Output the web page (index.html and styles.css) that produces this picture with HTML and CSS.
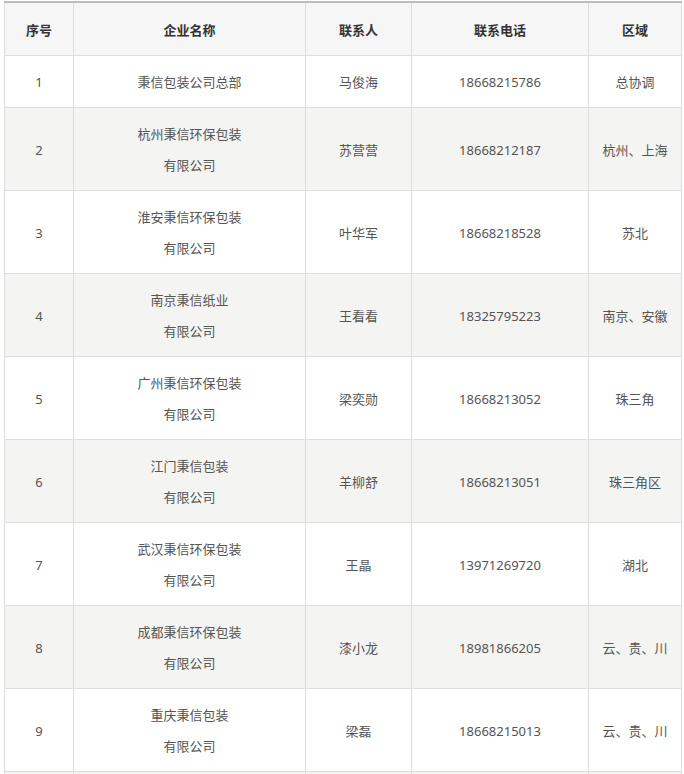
FILE: index.html
```html
<!DOCTYPE html>
<html lang="zh-CN">
<head>
<meta charset="utf-8">
<title>联系方式</title>
<link rel="stylesheet" href="styles.css">
</head>
<body>
<div class="wrap">
<table class="contacts">
  <colgroup>
    <col class="c-no"><col class="c-name"><col class="c-person"><col class="c-phone"><col class="c-area">
  </colgroup>
  <thead>
    <tr><th>序号</th><th>企业名称</th><th>联系人</th><th>联系电话</th><th>区域</th></tr>
  </thead>
  <tbody>
    <tr><td>1</td><td>秉信包装公司总部</td><td>马俊海</td><td>18668215786</td><td>总协调</td></tr>
    <tr><td>2</td><td>杭州秉信环保包装<br>有限公司</td><td>苏营营</td><td>18668212187</td><td>杭州、上海</td></tr>
    <tr><td>3</td><td>淮安秉信环保包装<br>有限公司</td><td>叶华军</td><td>18668218528</td><td>苏北</td></tr>
    <tr><td>4</td><td>南京秉信纸业<br>有限公司</td><td>王看看</td><td>18325795223</td><td>南京、安徽</td></tr>
    <tr><td>5</td><td>广州秉信环保包装<br>有限公司</td><td>梁奕勋</td><td>18668213052</td><td>珠三角</td></tr>
    <tr><td>6</td><td>江门秉信包装<br>有限公司</td><td>羊柳舒</td><td>18668213051</td><td>珠三角区</td></tr>
    <tr><td>7</td><td>武汉秉信环保包装<br>有限公司</td><td>王晶</td><td>13971269720</td><td>湖北</td></tr>
    <tr><td>8</td><td>成都秉信环保包装<br>有限公司</td><td>漆小龙</td><td>18981866205</td><td>云、贵、川</td></tr>
    <tr><td>9</td><td>重庆秉信包装<br>有限公司</td><td>梁磊</td><td>18668215013</td><td>云、贵、川</td></tr>
    <tr class="more"><td></td><td></td><td></td><td></td><td></td></tr>
  </tbody>
</table>
</div>
</body>
</html>
```
FILE: styles.css
```css
html, body {
  margin: 0;
  padding: 0;
  background: #ffffff;
}
.wrap {
  padding: 1px 0 0 4px;
}
.contacts {
  border-collapse: collapse;
  table-layout: fixed;
  width: 677px;
  border-top: 2px solid #bdbdbd;
  font-family: "Noto Sans", "Noto Sans CJK SC", sans-serif;
  font-size: 13px;
  line-height: 31px;
  color: #555555;
}
.c-no { width: 69px; }
.c-name { width: 232px; }
.c-person { width: 106px; }
.c-phone { width: 177px; }
.c-area { width: 93px; }
.contacts th,
.contacts td {
  border: 1px solid #dddddd;
  text-align: center;
  vertical-align: middle;
  padding: 11px 5px 9px;
  font-weight: normal;
}
.contacts th {
  background: #f6f6f6;
  color: #333333;
  font-weight: bold;
  padding: 12px 5px 9px;
}
.contacts tbody tr:nth-child(even) td {
  background: #f4f4f2;
}
.contacts tr.more td {
  height: 62px;
}
```
